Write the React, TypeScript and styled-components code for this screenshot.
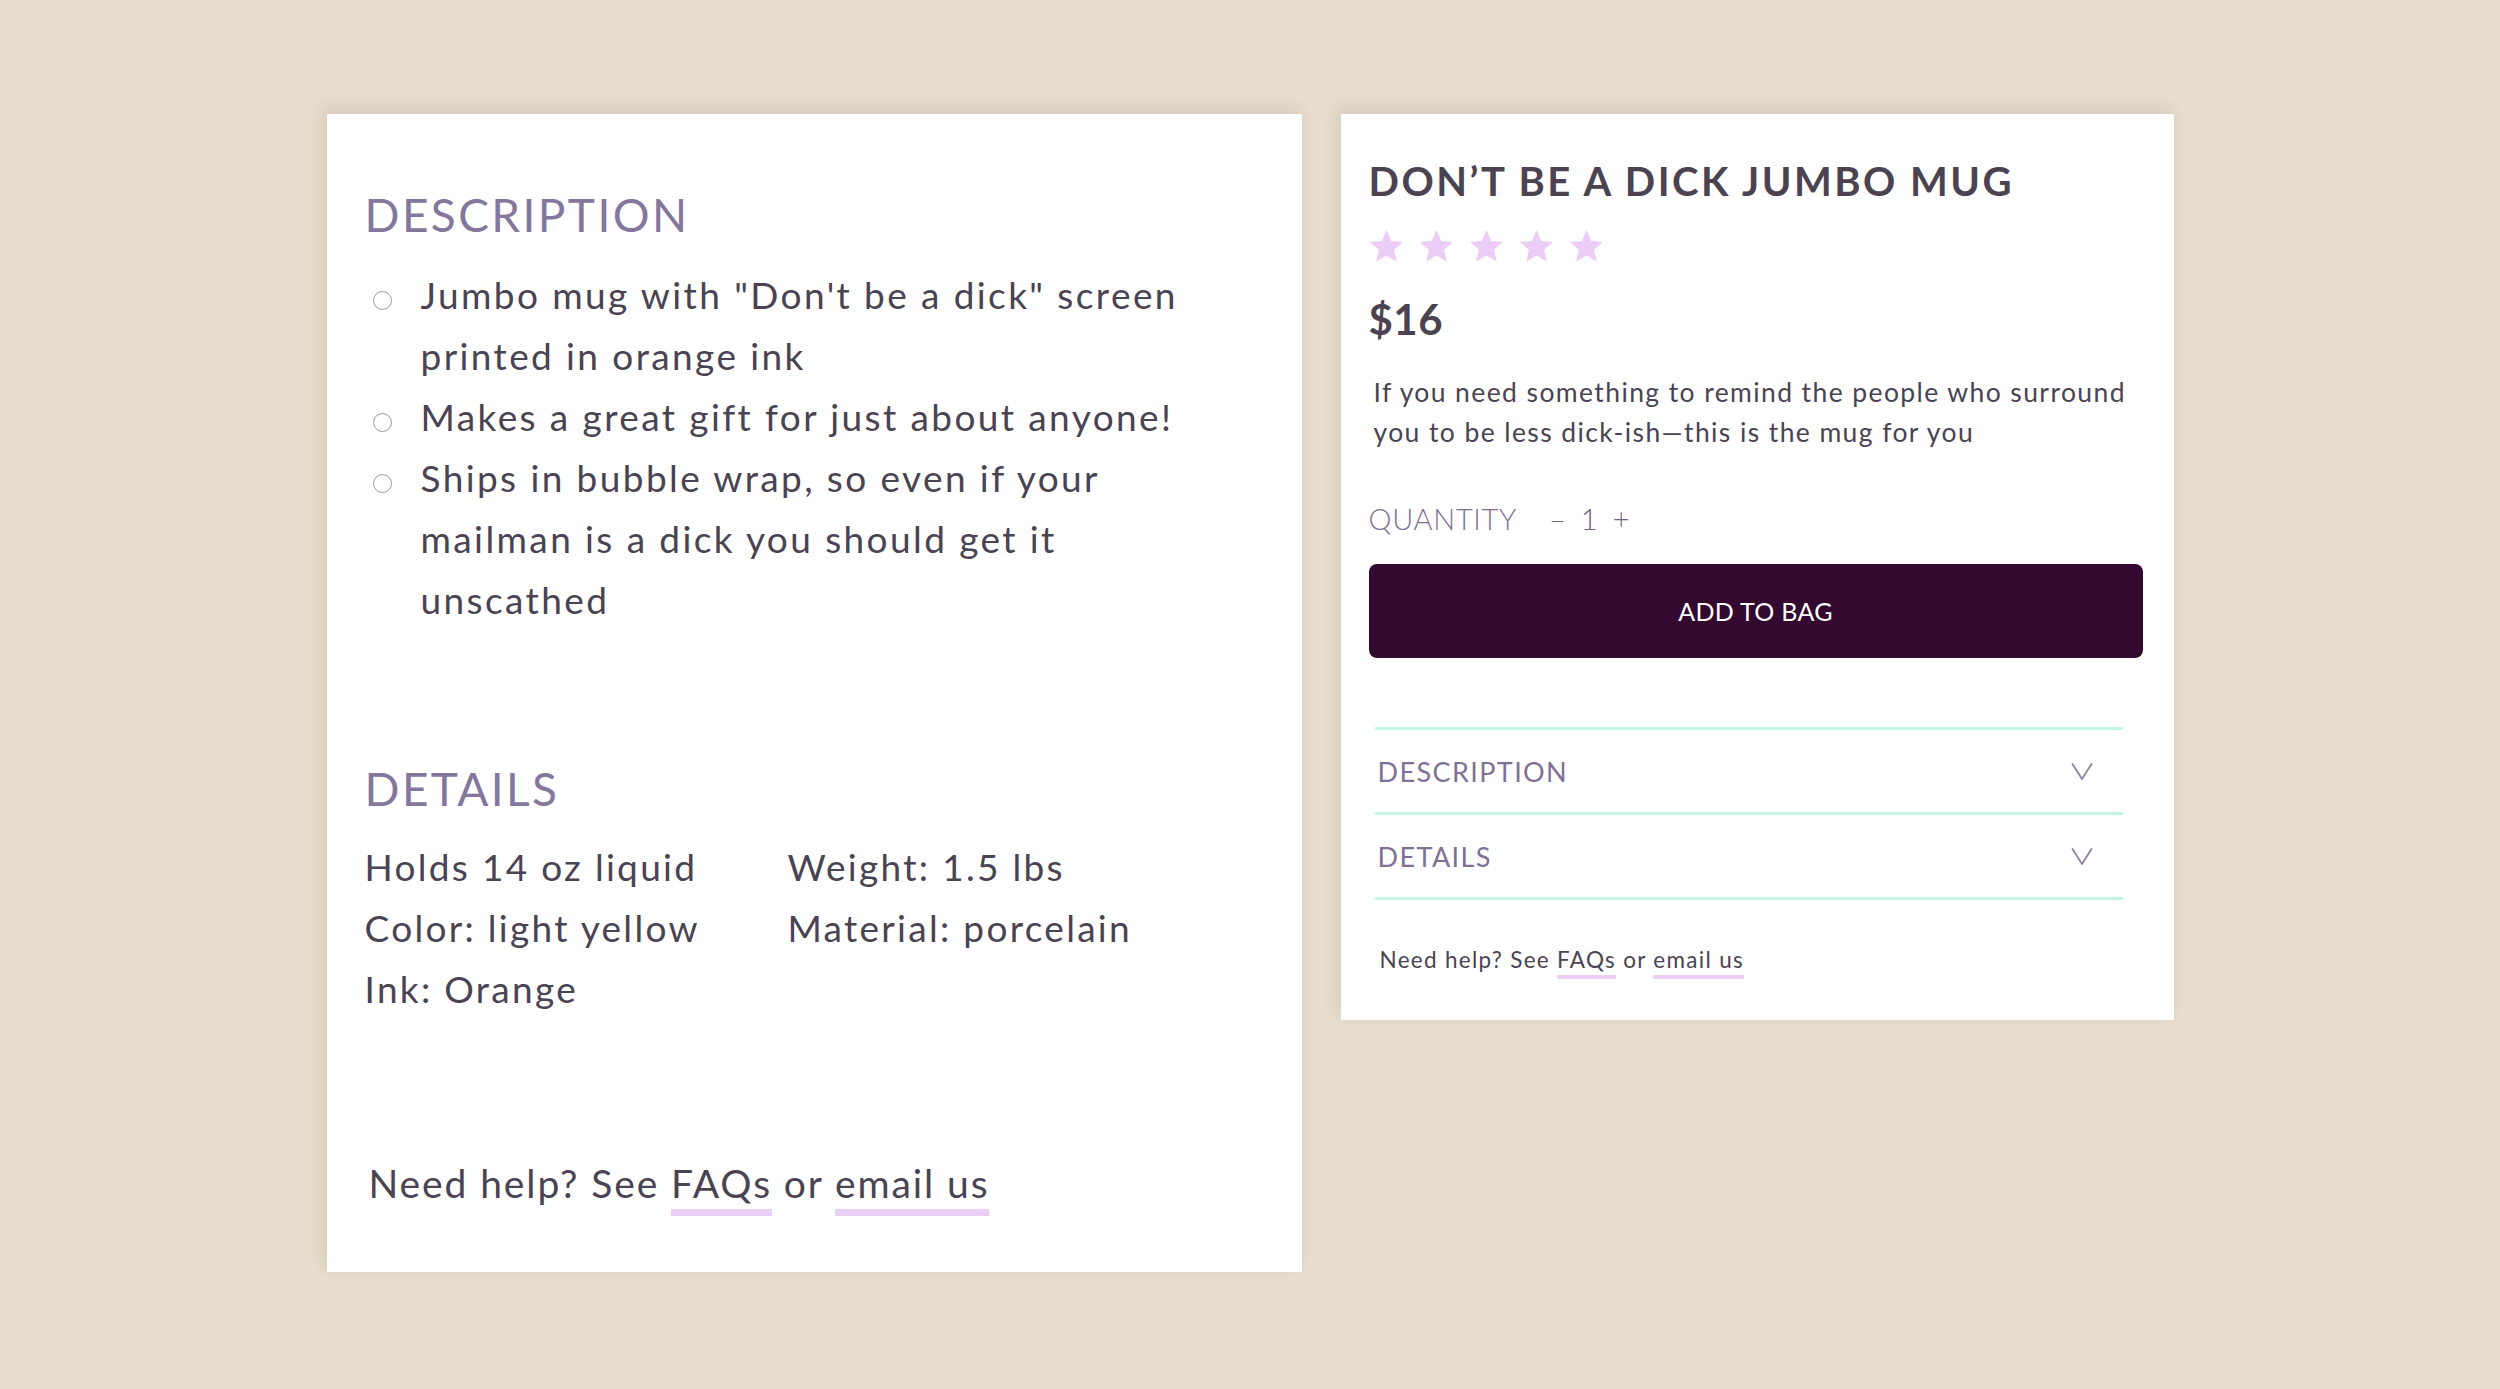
import React from 'react';
import styled, { createGlobalStyle } from 'styled-components';

const GlobalStyle = createGlobalStyle`
    html, body {
        margin: 0;
        padding: 0;
        background: #e7dccd;
    }
    body {
        font-family: 'Lato', 'Liberation Sans', sans-serif;
        color: #4a4351;
    }
    * {
        box-sizing: border-box;
    }
`;

const bullets = [
    'Jumbo mug with "Don\'t be a dick" screen printed in orange ink',
    'Makes a great gift for just about anyone!',
    'Ships in bubble wrap, so even if your mailman is a dick you should get it unscathed',
];

const details = [
    'Holds 14 oz liquid',
    'Weight: 1.5 lbs',
    'Color: light yellow',
    'Material: porcelain',
    'Ink: Orange',
];

function Star() {
    return (
        <svg width="35" height="35" viewBox="0 0 24 24">
            <polygon
                points="12,1.5 14.9,8.6 22.5,9.2 16.7,14.1 18.5,21.6 12,17.6 5.5,21.6 7.3,14.1 1.5,9.2 9.1,8.6"
                fill="#ebcdf8"
                stroke="#ebcdf8"
                strokeWidth="0.8"
                strokeLinejoin="round"
            />
        </svg>
    );
}

function Chevron() {
    return (
        <svg width="22" height="17" viewBox="0 0 22 17">
            <polyline points="1.5,1 11,16 20.5,1" fill="none" stroke="#8d82a3" strokeWidth="1.8" strokeLinecap="round" strokeLinejoin="round" />
        </svg>
    );
}

function App() {
    return (
        <>
            <GlobalStyle />
            <Page>
                <InfoPanel>
                    <SectionHeading>DESCRIPTION</SectionHeading>
                    <BulletList>
                        {bullets.map((text, idx) => (
                            <BulletItem key={idx}>
                                <BulletDot />
                                <BulletText>{text}</BulletText>
                            </BulletItem>
                        ))}
                    </BulletList>
                    <SectionHeading $spaced>DETAILS</SectionHeading>
                    <DetailGrid>
                        {details.map((text, idx) => (
                            <DetailCell key={idx}>{text}</DetailCell>
                        ))}
                    </DetailGrid>
                    <HelpLine $size={39} $spacing={1.9} $offset={11} $thickness={7}>
                        Need help? See <HelpLink>FAQs</HelpLink> or <HelpLink>email us</HelpLink>
                    </HelpLine>
                </InfoPanel>

                <BuyPanel>
                    <Title>DON’T BE A DICK JUMBO MUG</Title>
                    <Stars>
                        {[0, 1, 2, 3, 4].map((i) => <Star key={i} />)}
                    </Stars>
                    <Price>$16</Price>
                    <Blurb>
                        If you need something to remind the people who surround you to be less dick-ish—this is the mug for you
                    </Blurb>
                    <QuantityRow>
                        <QuantityLabel>QUANTITY</QuantityLabel>
                        <Stepper>
                            <span>–</span>
                            <span>1</span>
                            <span>+</span>
                        </Stepper>
                    </QuantityRow>
                    <AddButton>ADD TO BAG</AddButton>
                    <Accordion>
                        <AccordionItem>
                            <AccordionTitle>DESCRIPTION</AccordionTitle>
                            <Chevron />
                        </AccordionItem>
                        <AccordionItem>
                            <AccordionTitle>DETAILS</AccordionTitle>
                            <Chevron />
                        </AccordionItem>
                    </Accordion>
                    <SmallHelp $size={22.5} $spacing={1.3} $offset={7} $thickness={3.5}>
                        Need help? See <HelpLink>FAQs</HelpLink> or <HelpLink>email us</HelpLink>
                    </SmallHelp>
                </BuyPanel>
            </Page>
        </>
    );
}

const Page = styled.div`
    min-height: 100vh;
    display: flex;
    justify-content: center;
    align-items: flex-start;
    gap: 39px;
    padding-top: 114px;
`;

const Card = styled.div`
    background: #ffffff;
    box-shadow: -4px -6px 14px rgba(110, 90, 60, 0.12);
`;

const InfoPanel = styled(Card)`
    width: 975px;
    height: 1158px;
    display: flex;
    flex-direction: column;
    padding: 78px 40px 66px 38px;
`;

const SectionHeading = styled.h2<{ $spaced?: boolean }>`
    margin: ${(p) => (p.$spaced ? '136px' : '0')} 0 0 0;
    font-size: 46px;
    line-height: 46px;
    font-weight: 400;
    letter-spacing: 2.4px;
    color: #84779c;
`;

const BulletList = styled.ul`
    list-style: none;
    margin: 26px 0 0 0;
    padding: 0;
`;

const BulletItem = styled.li`
    display: flex;
    align-items: flex-start;
`;

const BulletDot = styled.span`
    flex-shrink: 0;
    width: 19px;
    height: 19px;
    margin: 27px 29px 0 8px;
    border: 1.5px solid #9b979c;
    border-radius: 50%;
`;

const BulletText = styled.span`
    max-width: 792px;
    font-size: 37px;
    line-height: 61px;
    font-weight: 400;
    letter-spacing: 2.4px;
    color: #4a4351;
`;

const DetailGrid = styled.div`
    display: grid;
    grid-template-columns: 423px auto;
    margin-top: 24px;
`;

const DetailCell = styled.div`
    font-size: 37px;
    line-height: 61px;
    font-weight: 400;
    letter-spacing: 2.3px;
    color: #4a4351;
`;

const HelpLine = styled.div<{ $size: number; $spacing: number; $offset: number; $thickness: number }>`
    margin-top: auto;
    padding-left: 4px;
    font-size: ${(p) => p.$size}px;
    letter-spacing: ${(p) => p.$spacing}px;
    font-weight: 400;
    color: #4a4351;

    span {
        text-decoration-thickness: ${(p) => p.$thickness}px;
        text-underline-offset: ${(p) => p.$offset}px;
    }
`;

const SmallHelp = styled(HelpLine)`
    margin-top: 46px;
    padding-left: 11px;
`;

const HelpLink = styled.span`
    text-decoration-line: underline;
    text-decoration-color: #e9cef6;
    text-decoration-skip-ink: none;
`;

const BuyPanel = styled(Card)`
    width: 833px;
    padding: 47px 31px 47px 28px;
`;

const Title = styled.h1`
    margin: 0;
    font-size: 40px;
    line-height: 40px;
    font-weight: 700;
    letter-spacing: 2.5px;
    color: #4b4350;
`;

const Stars = styled.div`
    display: flex;
    gap: 15px;
    margin-top: 28px;
    height: 35px;
`;

const Price = styled.div`
    margin-top: 34px;
    font-size: 42px;
    line-height: 42px;
    font-weight: 700;
    letter-spacing: 0.5px;
    color: #4b4350;
`;

const Blurb = styled.p`
    margin: 32px 0 0 5px;
    font-size: 26.5px;
    line-height: 40px;
    font-weight: 400;
    letter-spacing: 1.4px;
    color: #4a4351;
`;

const QuantityRow = styled.div`
    display: flex;
    align-items: baseline;
    margin-top: 52px;
`;

const QuantityLabel = styled.span`
    font-size: 29px;
    line-height: 29px;
    font-weight: 300;
    letter-spacing: 0.7px;
    color: #7f7196;
`;

const Stepper = styled.div`
    display: flex;
    align-items: baseline;
    gap: 15px;
    margin-left: 32px;
    font-size: 29px;
    line-height: 29px;
    font-weight: 300;
    color: #6f6384;
`;

const AddButton = styled.button`
    display: flex;
    align-items: center;
    justify-content: center;
    width: 100%;
    height: 94px;
    margin-top: 31px;
    border: none;
    border-radius: 8px;
    background: #33092f;
    color: #ffffff;
    font-family: 'Lato', 'Liberation Sans', sans-serif;
    font-size: 25px;
    font-weight: 400;
    letter-spacing: 0.3px;
`;

const Accordion = styled.div`
    margin: 69px 20px 0 6px;
    border-bottom: 3px solid #c3f6e1;
`;

const AccordionItem = styled.div`
    display: flex;
    align-items: center;
    justify-content: space-between;
    height: 85px;
    padding: 0 30px 0 3px;
    border-top: 3px solid #c3f6e1;
`;

const AccordionTitle = styled.span`
    font-size: 27px;
    font-weight: 400;
    letter-spacing: 1.4px;
    color: #7f7196;
`;

export default App;
